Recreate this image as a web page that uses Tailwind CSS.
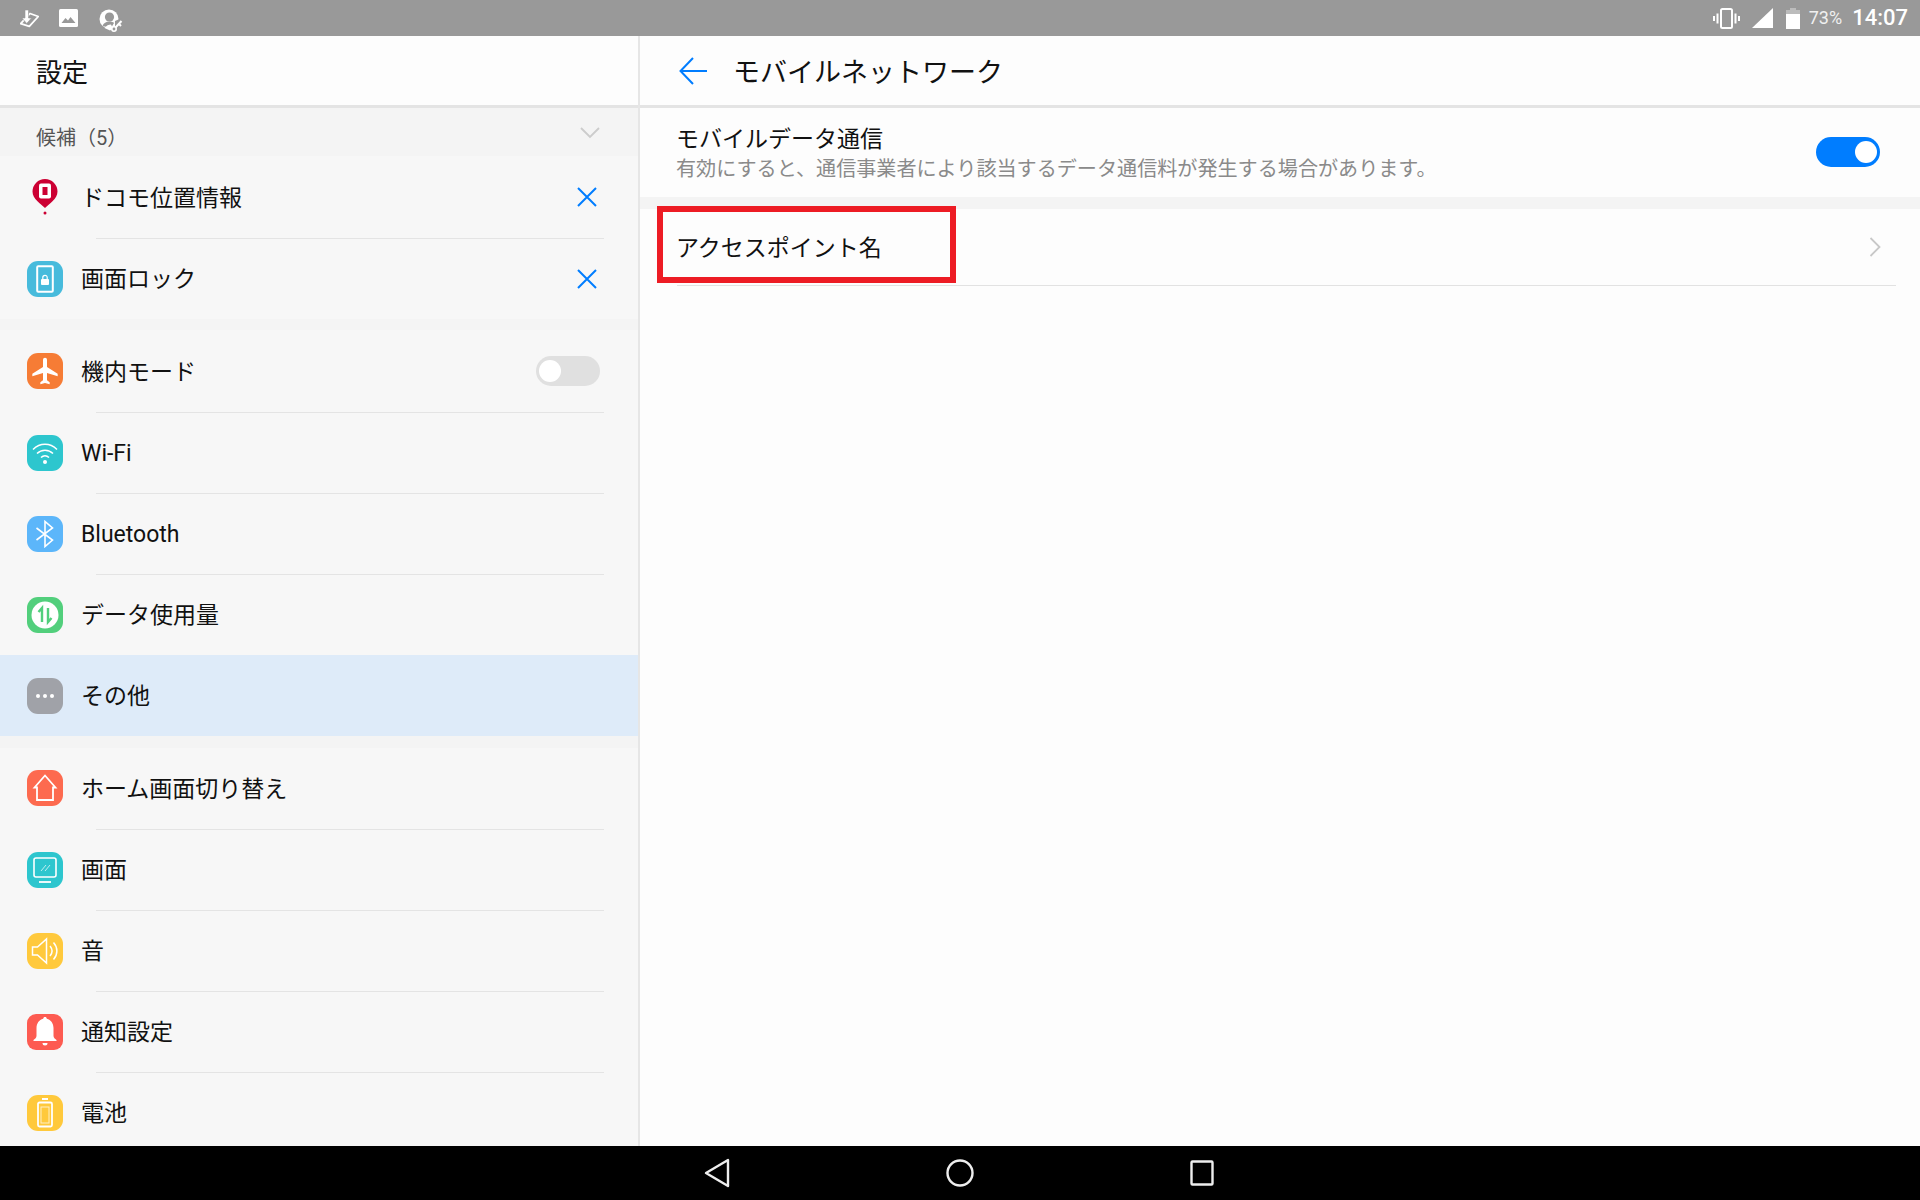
<!DOCTYPE html>
<html lang="ja">
<head>
<meta charset="utf-8">
<title>設定</title>
<script src="https://cdn.jsdelivr.net/npm/@tailwindcss/browser@4"></script>
</head>
<body class="w-[1920px] h-[1200px] overflow-hidden bg-[#fdfdfd] text-[#111111] font-['Roboto','Noto_Sans_CJK_JP',sans-serif]">
<div class="flex flex-col h-[1200px]">
  <!-- status bar -->
  <div class="h-[36px] bg-[#999999] flex items-center text-white shrink-0">
    <div class="flex items-center pl-[20px]">
      <svg class="w-[19px] h-[19px]" viewBox="0 0 19 19" fill="none"><path d="M10 4.500l8.300 3-9 9.800-8.600-2.600z" stroke="#fff" stroke-width="1.800" stroke-linejoin="round"/><path d="M5 1h3.500v8H11.500L6.700 14.500 2 9h3z" fill="#fff" stroke="#999" stroke-width=".6"/></svg>
      <svg class="w-[19px] h-[18px] ml-[20px]" viewBox="0 0 19 18"><rect width="19" height="18" rx="1.500" fill="#fff"/><path d="M2.500 14l4-5 2.500 2.500 2.500-3.500 5 6z" fill="#999"/></svg>
      <svg class="w-[25px] h-[25px] ml-[20px] mt-[5px]" viewBox="0 0 25 25" fill="none"><circle cx="11" cy="11" r="9.500" fill="#fff"/><circle cx="11.500" cy="9" r="4.600" fill="#999"/><path d="M4.500 18c1-3 3.500-4.500 7-4.500 2 0 3.500.5 4.500 1.500l-3 5z" fill="#999"/><path d="M6.500 20c2-2.500 4-3.500 6.500-3.500l2 4-3 2z" fill="#fff"/><path d="M17 13l7-3v8h-7z" fill="#999"/><circle cx="16" cy="21" r="2.200" fill="#999" stroke="#fff" stroke-width="1.600"/><path d="M17.500 19.500l6-6.500M21 16l2 2" stroke="#fff" stroke-width="2"/></svg>
    </div>
    <div class="ml-auto flex items-center">
      <svg class="w-[27px] h-[21px]" viewBox="0 0 27 21" fill="none" stroke="#fff"><rect x="8" y="1" width="11" height="19" rx="1.500" stroke-width="2"/><path d="M4.500 5.500v10M22.500 5.500v10M1 8v5M26 8v5" stroke-width="2"/></svg>
      <svg class="w-[21px] h-[20px] ml-[12px]" viewBox="0 0 21 20" fill="#fff"><path d="M21 0v20H0z"/></svg>
      <svg class="w-[14px] h-[21px] ml-[13px]" viewBox="0 0 14 21"><path d="M4 0h6v2h4v5H0V2h4z" fill="#fff" fill-opacity=".35"/><rect y="6" width="14" height="15" fill="#fff"/></svg>
      <span class="ml-[9px] text-[18px] leading-none text-[#f0f0f0]">73%</span>
      <span class="ml-[10px] mr-[12px] text-[22px] leading-none font-medium">14:07</span>
    </div>
  </div>

  <div class="flex flex-1 min-h-0">
    <!-- left panel -->
    <div class="w-[640px] shrink-0 flex flex-col bg-[#f7f7f7] border-r-2 border-[#e6e6e6] overflow-hidden">
      <div class="h-[72px] shrink-0 bg-[#fdfdfd] border-b-[3px] border-[#e4e4e4] flex items-center pl-[36px] text-[26px]"><span class="mt-[5px]">設定</span></div>
      <div class="h-[48px] shrink-0 bg-[#f4f4f4] flex items-center pl-[36px] pr-[38px] justify-between">
        <span class="text-[20px] text-[#555555] mt-[12px]">候補（5）</span>
        <svg class="w-[20px] h-[12px] mt-[2px]" viewBox="0 0 20 12" fill="none" stroke="#cccccc" stroke-width="1.800"><path d="M1 1l9 9 9-9"/></svg>
      </div>

      <div class="flex items-center h-[82px] pb-[1px] pl-[27px] pr-[41px] shrink-0">
        <span class="w-[36px] h-[36px] flex items-center justify-center">
          <svg class="w-[26px] h-[36px]" viewBox="0 0 26 36"><path d="M13 0a12.500 12.500 0 0 1 12.500 12.500C25.500 20 17 25 13 29 9 25 .5 20 .5 12.500A12.500 12.500 0 0 1 13 0z" fill="#cc0033"/><rect x="7" y="4.500" width="12" height="15" rx="2" fill="#fff"/><rect x="10.500" y="8" width="5" height="8" fill="#cc0033"/><circle cx="13" cy="34" r="1.500" fill="#cc0033"/></svg>
        </span>
        <span class="ml-[18px] text-[23px] mt-[5px]">ドコモ位置情報</span>
        <svg class="ml-auto w-[20px] h-[20px]" viewBox="0 0 20 20" fill="none" stroke="#007dff" stroke-width="2"><path d="M1 1l18 18M19 1L1 19"/></svg>
      </div>
      <div class="ml-[96px] w-[508px] h-[1px] bg-[#e4e4e4] shrink-0"></div>
      <div class="flex items-center h-[80px] pl-[27px] pr-[41px] shrink-0">
        <span class="w-[36px] h-[36px] rounded-[11px] bg-[#47bbdc] flex items-center justify-center">
          <svg class="w-[18px] h-[28px]" viewBox="0 0 18 28" fill="none"><rect x="1.200" y="1.200" width="15.600" height="25.600" rx="1" stroke="#fff" stroke-width="2" fill="#47bbdc"/><rect x="5" y="14" width="8" height="6" rx="1" fill="#fff"/><path d="M6.800 14v-1.500a2.200 2.200 0 0 1 4.400 0V14" stroke="#fff" stroke-width="1.200"/></svg>
        </span>
        <span class="ml-[18px] text-[23px] mt-[3px]">画面ロック</span>
        <svg class="ml-auto w-[20px] h-[20px]" viewBox="0 0 20 20" fill="none" stroke="#007dff" stroke-width="2"><path d="M1 1l18 18M19 1L1 19"/></svg>
      </div>
      <div class="h-[11px] bg-[#f4f4f4] shrink-0"></div>

      <div class="flex items-center h-[82px] pb-[1px] pl-[27px] pr-[38px] shrink-0">
        <span class="w-[36px] h-[36px] rounded-[11px] bg-[#f67c35] flex items-center justify-center">
          <svg class="w-[32px] h-[32px]" viewBox="0 0 24 24" fill="#fff"><path d="M21 16v-2l-8-5V3.500a1.500 1.500 0 0 0-3 0V9l-8 5v2l8-2.500V19l-2 1.500V22l3.500-1 3.500 1v-1.500L13 19v-5.500z" transform="translate(.5 0)"/></svg>
        </span>
        <span class="ml-[18px] text-[23px] mt-[5px]">機内モード</span>
        <span class="ml-auto w-[64px] h-[30px] rounded-full bg-[#e0e0e0] flex items-center pl-[3px]"><span class="w-[22px] h-[22px] rounded-full bg-white"></span></span>
      </div>
      <div class="ml-[96px] w-[508px] h-[1px] bg-[#e4e4e4] shrink-0"></div>
      <div class="flex items-center h-[80px] pb-[1px] pl-[27px] shrink-0">
        <span class="w-[36px] h-[36px] rounded-[11px] bg-[#2dc6ce] flex items-center justify-center">
          <svg class="w-[28px] h-[26px]" viewBox="0 0 28 26" fill="none" stroke="#fff" stroke-width="1.500"><path d="M2 9.500c7-7 17-7 24 0M6 13.500c4.500-4.500 11.500-4.500 16 0M10 17.500c2.500-2.500 5.500-2.500 8 0"/><circle cx="14" cy="22" r="2" fill="#fff" stroke="none"/></svg>
        </span>
        <span class="ml-[18px] text-[23px] mt-[3px]">Wi-Fi</span>
      </div>
      <div class="ml-[96px] w-[508px] h-[1px] bg-[#e4e4e4] shrink-0"></div>
      <div class="flex items-center h-[80px] pb-[1px] pl-[27px] shrink-0">
        <span class="w-[36px] h-[36px] rounded-[11px] bg-[#5cb6fa] flex items-center justify-center">
          <svg class="w-[20px] h-[28px]" viewBox="0 0 20 28" fill="none" stroke="#fff" stroke-width="1.600"><path d="M1.500 8l16 12L10 26.500V1.500L17.500 8l-16 12"/></svg>
        </span>
        <span class="ml-[18px] text-[23px] mt-[3px]">Bluetooth</span>
      </div>
      <div class="ml-[96px] w-[508px] h-[1px] bg-[#e4e4e4] shrink-0"></div>
      <div class="flex items-center h-[80px] pl-[27px] shrink-0">
        <span class="w-[36px] h-[36px] rounded-[11px] bg-[#52cf7c] flex items-center justify-center">
          <svg class="w-[28px] h-[28px]" viewBox="0 0 28 28"><circle cx="14" cy="14" r="13.500" fill="#fff"/><path d="M11 21V7L7.500 11M17 7v14l3.500-4" fill="none" stroke="#52cf7c" stroke-width="2.400"/></svg>
        </span>
        <span class="ml-[18px] text-[23px] mt-[3px]">データ使用量</span>
      </div>
      <div class="flex items-center h-[81px] pl-[27px] bg-[#deebf9] shrink-0">
        <span class="w-[36px] h-[36px] rounded-[11px] bg-[#a0a2a8] flex items-center justify-center gap-[3px]">
          <span class="w-[4px] h-[4px] rounded-full bg-white"></span><span class="w-[4px] h-[4px] rounded-full bg-white"></span><span class="w-[4px] h-[4px] rounded-full bg-white"></span>
        </span>
        <span class="ml-[18px] text-[23px] mt-[3px]">その他</span>
      </div>
      <div class="h-[12px] bg-[#f4f4f4] shrink-0"></div>

      <div class="flex items-center h-[81px] pb-[1px] pl-[27px] shrink-0">
        <span class="w-[36px] h-[36px] rounded-[11px] bg-[#fd6a4f] flex items-center justify-center">
          <svg class="w-[26px] h-[28px]" viewBox="0 0 26 28" fill="none" stroke="#fff" stroke-width="1.800"><path d="M2.500 13.500L13 1.500l10.500 12H21v12.500H5V13.500z"/></svg>
        </span>
        <span class="ml-[18px] text-[23px] mt-[5px]">ホーム画面切り替え</span>
      </div>
      <div class="ml-[96px] w-[508px] h-[1px] bg-[#e4e4e4] shrink-0"></div>
      <div class="flex items-center h-[80px] pb-[1px] pl-[27px] shrink-0">
        <span class="w-[36px] h-[36px] rounded-[11px] bg-[#2dc6ce] flex items-center justify-center">
          <svg class="w-[26px] h-[28px]" viewBox="0 0 26 28" fill="none" stroke="#fff"><rect x="2" y="2" width="22" height="19" rx="2" stroke-width="1.600"/><path d="M9 15l5-6M13 15l5-6" stroke-width="1" stroke-opacity=".7"/><path d="M7 26h12" stroke-width="1.800"/></svg>
        </span>
        <span class="ml-[18px] text-[23px] mt-[3px]">画面</span>
      </div>
      <div class="ml-[96px] w-[508px] h-[1px] bg-[#e4e4e4] shrink-0"></div>
      <div class="flex items-center h-[80px] pb-[1px] pl-[27px] shrink-0">
        <span class="w-[36px] h-[36px] rounded-[11px] bg-[#ffc93c] flex items-center justify-center">
          <svg class="w-[28px] h-[28px]" viewBox="0 0 28 28" fill="none" stroke="#fff" stroke-width="1.500"><path d="M1.500 10v8h5l9 8V2l-9 8z"/><path d="M19 9c2.500 3 2.500 7 0 10M22.500 5.500c4.500 5 4.500 12 0 17"/></svg>
        </span>
        <span class="ml-[18px] text-[23px] mt-[3px]">音</span>
      </div>
      <div class="ml-[96px] w-[508px] h-[1px] bg-[#e4e4e4] shrink-0"></div>
      <div class="flex items-center h-[80px] pb-[1px] pl-[27px] shrink-0">
        <span class="w-[36px] h-[36px] rounded-[9px] bg-[#fd5b51] flex items-center justify-center">
          <svg class="w-[24px] h-[30px]" viewBox="0 0 24 30" fill="#fff"><path d="M12 0c1 0 1.700.7 1.800 1.700C18 2.800 20.500 6.500 20.500 11v8c0 2 2 3 3 4v1H.500v-1c1-1 3-2 3-4v-8c0-4.500 2.500-8.200 6.700-9.300C10.300.7 11 0 12 0z"/><path d="M9.500 26h5a2.500 2.500 0 0 1-5 0z"/></svg>
        </span>
        <span class="ml-[18px] text-[23px] mt-[3px]">通知設定</span>
      </div>
      <div class="ml-[96px] w-[508px] h-[1px] bg-[#e4e4e4] shrink-0"></div>
      <div class="flex items-center h-[80px] pb-[1px] pl-[27px] shrink-0">
        <span class="w-[36px] h-[36px] rounded-[11px] bg-[#ffc93c] flex items-center justify-center">
          <svg class="w-[18px] h-[30px]" viewBox="0 0 18 30" fill="none" stroke="#fff"><path d="M6 1h6" stroke-width="2"/><rect x="2" y="4.500" width="14" height="24" rx="1.500" stroke-width="1.800"/><rect x="5" y="9" width="8" height="16" stroke-width="1" stroke-opacity=".7"/></svg>
        </span>
        <span class="ml-[18px] text-[23px] mt-[3px]">電池</span>
      </div>
    </div>

    <!-- right panel -->
    <div class="flex-1 flex flex-col bg-[#fdfdfd] relative">
      <div class="h-[72px] shrink-0 border-b-[3px] border-[#e4e4e4] flex items-center pl-[39px] text-[27px]">
        <svg class="w-[29px] h-[28px]" viewBox="0 0 29 28" fill="none" stroke="#007dff" stroke-width="2"><path d="M28 14H2M14 1L1.500 14 14 27"/></svg>
        <span class="ml-[25px] mt-[5px]">モバイルネットワーク</span>
      </div>
      <div class="h-[89px] shrink-0 flex items-center pl-[36px] pr-[40px]">
        <div class="flex flex-col pt-[2px]">
          <span class="text-[23px] leading-[30px]">モバイルデータ通信</span>
          <span class="text-[20.1px] leading-[28px] text-[#8a8a8a]">有効にすると、通信事業者により該当するデータ通信料が発生する場合があります。</span>
        </div>
        <span class="ml-auto mb-[2px] w-[64px] h-[30px] rounded-full bg-[#007dff] flex items-center justify-end pr-[3px]"><span class="w-[22px] h-[22px] rounded-full bg-white"></span></span>
      </div>
      <div class="h-[12px] shrink-0 bg-[#f4f4f4]"></div>
      <div class="h-[76px] shrink-0 flex items-center pl-[36px] pr-[39px] text-[23px]">
        <span class="mt-[4px]">アクセスポイント名</span>
        <svg class="ml-auto mb-[1px] w-[12px] h-[20px]" viewBox="0 0 12 20" fill="none" stroke="#c8c8c8" stroke-width="1.800"><path d="M1.500 1l9 9-9 9"/></svg>
      </div>
      <div class="ml-[37px] mr-[24px] h-[1px] bg-[#e2e2e2] shrink-0"></div>
      <div class="absolute left-[17px] top-[170px] w-[299px] h-[77px] border-[6px] border-[#ed1c24]"></div>
    </div>
  </div>

  <!-- nav bar -->
  <div class="h-[54px] bg-black shrink-0 flex items-center justify-center gap-[216px] pr-[3px]">
    <svg class="w-[26px] h-[30px]" viewBox="0 0 26 30" fill="none" stroke="#eeeeee" stroke-width="2.400" stroke-linejoin="round"><path d="M2 15L24 2v26z"/></svg>
    <svg class="w-[28px] h-[28px]" viewBox="0 0 28 28" fill="none" stroke="#eeeeee" stroke-width="2.400"><circle cx="14" cy="14" r="12.500"/></svg>
    <svg class="w-[24px] h-[26px]" viewBox="0 0 24 26" fill="none" stroke="#eeeeee" stroke-width="2.400"><rect x="1.500" y="1.500" width="21" height="23" rx="1"/></svg>
  </div>
</div>
</body>
</html>
